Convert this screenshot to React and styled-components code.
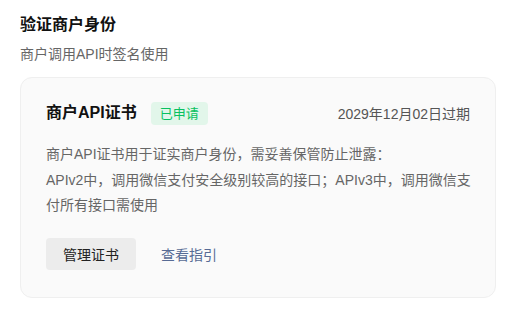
import React from 'react'
import styled, { createGlobalStyle } from 'styled-components'

const GlobalStyle = createGlobalStyle`
  body {
    margin: 0;
    background: #fff;
    font-family: "Liberation Sans", "Noto Sans CJK SC", sans-serif;
  }
`

const Page = styled.div`
  padding: 14px 12px 0 20px;
`

const Title = styled.h2`
  margin: 0;
  font-size: 16px;
  line-height: 22px;
  font-weight: 700;
  color: #111;
`

const Sub = styled.p`
  margin: 9px 0 0;
  font-size: 14px;
  line-height: 18px;
  color: #666;
`

const Card = styled.div`
  margin-top: 14px;
  width: 476px;
  box-sizing: border-box;
  padding: 23px 22px 27px 25px;
  background: #fafafa;
  border: 1px solid #efefef;
  border-radius: 12px;
`

const Head = styled.div`
  display: flex;
  align-items: center;
  padding-right: 3px;
`

const CardTitle = styled.span`
  font-size: 16px;
  font-weight: 700;
  color: #111;
  line-height: 24px;
`

const Badge = styled.span`
  margin-left: 14px;
  padding: 0 9px;
  height: 23px;
  line-height: 23px;
  font-size: 13px;
  color: #07c160;
  background: #e2f6ea;
  border-radius: 4px;
`

const Expire = styled.span`
  margin-left: auto;
  font-size: 14px;
  color: #555;
`

const Desc = styled.p`
  margin: 17px 0 0;
  font-size: 14px;
  line-height: 25.5px;
  color: #666;
`

const Actions = styled.div`
  margin-top: 19px;
  display: flex;
  align-items: center;
  gap: 25px;
`

const Button = styled.button`
  width: 90px;
  height: 32px;
  border: none;
  border-radius: 4px;
  background: #ececec;
  color: #222;
  font-family: inherit;
  font-size: 14px;
`

const Link = styled.a`
  font-size: 14px;
  color: #576b95;
  text-decoration: none;
`

export default function App() {
  return (
    <Page>
      <GlobalStyle />
      <Title>验证商户身份</Title>
      <Sub>商户调用API时签名使用</Sub>
      <Card>
        <Head>
          <CardTitle>商户API证书</CardTitle>
          <Badge>已申请</Badge>
          <Expire>2029年12月02日过期</Expire>
        </Head>
        <Desc>
          商户API证书用于证实商户身份，需妥善保管防止泄露：
          <br />
          APIv2中，调用微信支付安全级别较高的接口；APIv3中，调用微信支付所有接口需使用
        </Desc>
        <Actions>
          <Button>管理证书</Button>
          <Link href="#">查看指引</Link>
        </Actions>
      </Card>
    </Page>
  )
}
